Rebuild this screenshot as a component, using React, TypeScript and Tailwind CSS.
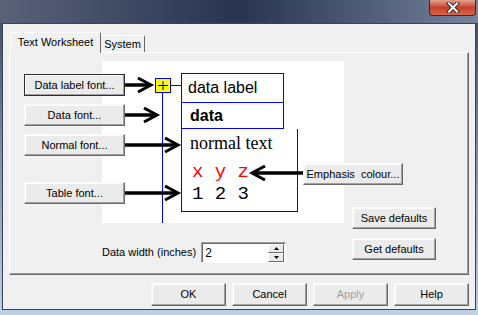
import type { ReactNode } from "react";

function Btn({
  children,
  className = "",
  def = false,
  disabled = false,
}: {
  children: ReactNode;
  className?: string;
  def?: boolean;
  disabled?: boolean;
}) {
  return (
    <button
      className={`flex items-center justify-center bg-[#ebebeb] border text-[11px] leading-none whitespace-pre shadow-[inset_-1px_-1px_0_#a0a0a0,inset_1px_1px_0_#ffffff] ${
        def
          ? "border-[#2f2f2f]"
          : "border-t-[#f8f8f8] border-l-[#f8f8f8] border-r-[#696969] border-b-[#696969]"
      } ${disabled ? "text-[#a0a0a0]" : "text-black"} ${className}`}
    >
      {children}
    </button>
  );
}

function ArrowRight({ x1, tip, y }: { x1: number; tip: number; y: number }) {
  return (
    <g stroke="#000" strokeWidth="3.5" fill="none">
      <line x1={x1} y1={y} x2={tip - 2} y2={y} />
      <polyline points={`${tip - 13},${y - 7} ${tip},${y} ${tip - 13},${y + 7}`} strokeWidth="3" />
    </g>
  );
}

export default function App() {
  return (
    <div className="relative flex h-[315px] w-[478px] flex-col overflow-hidden bg-gradient-to-b from-[#3c4660] via-[#7b90ae] to-[#bcd2ea] px-[2px] pb-[5px] font-['Liberation_Sans',Arial,sans-serif] text-[11px] text-black">
      {/* title bar */}
      <div className="-mx-[2px] h-[23px] shrink-0 bg-gradient-to-r from-[#5a6278] via-[#283450] to-[#76839c]" />
      <div className="absolute right-[2px] top-0 flex h-[16px] w-[47px] items-center justify-center rounded-b-[4px] border border-t-0 border-[#4a2219] bg-gradient-to-b from-[#e3a08f] via-[#c5402a] to-[#d9664a]">
        <svg width="14" height="11" viewBox="0 0 14 11" aria-hidden="true">
          <path d="M3 1.5 L11 9.5 M11 1.5 L3 9.5" stroke="#3a2a28" strokeWidth="4" strokeLinecap="square" />
          <path d="M3 1.5 L11 9.5 M11 1.5 L3 9.5" stroke="#ffffff" strokeWidth="2" strokeLinecap="square" />
        </svg>
      </div>

      {/* dialog body */}
      <div className="flex flex-1 flex-col border border-[#3d4350] bg-[#f0f0f0] px-[6px] pt-[8px]">
        {/* tabs */}
        <div className="relative z-10 flex h-[20px] items-end pl-[1px]">
          <div className="-mb-[1px] flex h-[21px] w-[91px] items-center justify-center rounded-t-[2px] border border-b-0 border-l-white border-t-white border-r-[#696969] bg-[#f0f0f0] pb-[1px]">
            Text Worksheet
          </div>
          <div className="flex h-[17px] w-[44px] items-center justify-center rounded-tr-[2px] border border-b-0 border-l-0 border-t-white border-r-[#696969] bg-[#f0f0f0]">
            System
          </div>
        </div>

        {/* tab panel */}
        <div className="flex h-[223px] border border-b-[#696969] border-l-white border-r-[#696969] border-t-white shadow-[inset_-1px_-1px_0_#a0a0a0]">
          <div className="flex w-[342px] flex-col">
            <div className="relative h-[170px]">
              {/* preview canvas */}
              <div className="absolute left-[92px] top-[8px] h-[162px] w-[242px] bg-white">
                <div className="absolute left-[79px] top-[12px] flex flex-col">
                  <div className="flex h-[30px] w-[103px] items-center border border-[#0000ff] pl-[6px] text-[16px]">
                    data label
                  </div>
                  <div className="flex h-[26px] w-[103px] items-center border-x border-b border-[#0000ff] pl-[8px] text-[16px] font-bold">
                    data
                  </div>
                  <div className="flex h-[83px] w-[117px] flex-col border-x border-b border-[#0000ff] pt-[3px]">
                    <div className="pl-[8px] font-['Liberation_Serif',serif] text-[18px] leading-[22px]">
                      normal text
                    </div>
                    <div className="mt-[7px] whitespace-pre pl-[10px] font-['Liberation_Mono',monospace] text-[19px] leading-[22px] text-[#ff0000]">
                      x y z
                    </div>
                    <div className="whitespace-pre pl-[10px] font-['Liberation_Mono',monospace] text-[19px] leading-[22px]">
                      1 2 3
                    </div>
                  </div>
                </div>
              </div>

              {/* connectors and arrows */}
              <svg
                className="pointer-events-none absolute left-0 top-0 overflow-visible"
                width="458"
                height="170"
                aria-hidden="true"
              >
                <line x1="152.5" y1="40" x2="152.5" y2="170" stroke="#0000ff" strokeWidth="1" />
                <line x1="161" y1="32.5" x2="171" y2="32.5" stroke="#0000ff" strokeWidth="1" />
                <rect x="145.5" y="25.5" width="15" height="14" fill="#ffff00" stroke="#0000ff" strokeWidth="1" />
                <line x1="148" y1="32.5" x2="158" y2="32.5" stroke="#000" strokeWidth="1" />
                <line x1="153" y1="28" x2="153" y2="37" stroke="#000" strokeWidth="1" />
                <ArrowRight x1={115} tip={141} y={32} />
                <ArrowRight x1={115} tip={147} y={62} />
                <ArrowRight x1={115} tip={168} y={92} />
                <ArrowRight x1={115} tip={168} y={140} />
                <g stroke="#000" strokeWidth="3.5" fill="none">
                  <line x1="293" y1="120" x2="244" y2="120" />
                  <polyline points="255,113 242,120 255,127" strokeWidth="3" />
                </g>
              </svg>

              <div className="relative z-10 flex flex-col pl-[14px] pt-[21px]">
                <Btn def className="h-[22px] w-[101px]">
                  Data label font...
                </Btn>
                <Btn className="mt-[8px] h-[22px] w-[101px]">Data font...</Btn>
                <Btn className="mt-[8px] h-[22px] w-[101px]">Normal font...</Btn>
                <Btn className="mt-[26px] h-[22px] w-[101px]">Table font...</Btn>
              </div>

              <Btn className="absolute left-[293px] top-[110px] z-10 h-[22px] w-[100px]">
                {"Emphasis  colour..."}
              </Btn>
            </div>

            <div className="mt-[19px] flex items-center pl-[92px]">
              <span>Data width (inches)</span>
              <div className="ml-[5px] flex h-[21px] w-[85px] items-center justify-between border border-b-white border-l-[#a0a0a0] border-r-white border-t-[#a0a0a0] bg-white shadow-[inset_1px_1px_0_#696969]">
                <span className="pl-[3px] text-[12px]">2</span>
                <div className="mr-[1px] flex flex-col">
                  <div className="flex h-[9px] w-[16px] items-center justify-center border border-b-[#696969] border-l-white border-r-[#696969] border-t-white bg-[#ebebeb]">
                    <svg width="5" height="3" viewBox="0 0 5 3" aria-hidden="true">
                      <polygon points="2.5,0 5,3 0,3" fill="#000" />
                    </svg>
                  </div>
                  <div className="flex h-[9px] w-[16px] items-center justify-center border border-b-[#696969] border-l-white border-r-[#696969] border-t-white bg-[#ebebeb]">
                    <svg width="5" height="3" viewBox="0 0 5 3" aria-hidden="true">
                      <polygon points="0,0 5,0 2.5,3" fill="#000" />
                    </svg>
                  </div>
                </div>
              </div>
            </div>
          </div>

          <div className="flex flex-col gap-[9px] pt-[154px]">
            <Btn className="h-[22px] w-[84px]">Save defaults</Btn>
            <Btn className="h-[22px] w-[84px]">Get defaults</Btn>
          </div>
        </div>

        {/* dialog buttons */}
        <div className="mt-[8px] flex justify-end gap-[6px]">
          <Btn className="h-[23px] w-[75px]">OK</Btn>
          <Btn className="h-[23px] w-[75px]">Cancel</Btn>
          <Btn disabled className="h-[23px] w-[75px]">
            Apply
          </Btn>
          <Btn className="h-[23px] w-[75px]">Help</Btn>
        </div>
      </div>
    </div>
  );
}
